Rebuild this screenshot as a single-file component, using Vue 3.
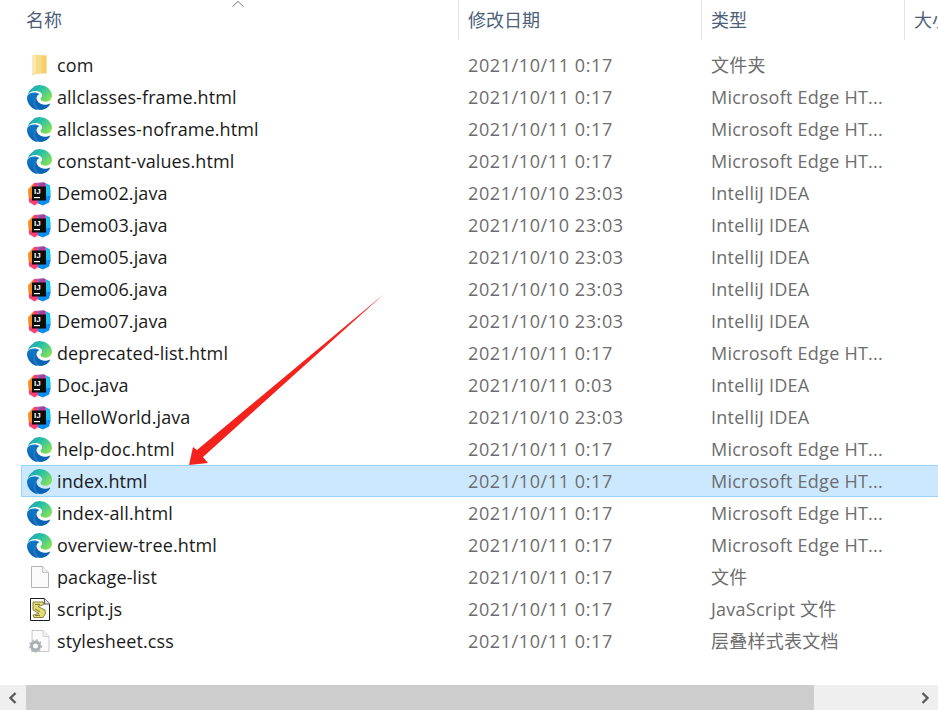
<template>
  <div class="explorer">
    <div class="header">
      <div class="col col-name">名称
        <svg class="sort" width="14" height="8" viewBox="0 0 14 8"><path d="M1.500 6.500 7 1.500l5.500 5" fill="none" stroke="#7b7b7b" stroke-width="1"/></svg>
      </div>
      <div class="col col-date">修改日期</div>
      <div class="col col-type">类型</div>
      <div class="col col-size">大小</div>
    </div>

    <div class="list">
      <div v-for="f in files" :key="f.name" class="row" :class="{ selected: f.name === 'index.html' }">
        <div class="name">
          <span class="icon">
            <svg v-if="f.icon === 'folder'" width="24" height="24" viewBox="0 0 24 24">
              <path d="M4 2.500 8 1.500l10.500 1.500v17.200L8 21l-4 1.500z" fill="#f8dc8a"/>
              <path d="M4 2.500 8 1.500V19l-4 3.500z" fill="#fbe9b0"/>
              <path d="M13.500 2.300h5v17.900h-5z" fill="#f3cf6e"/>
            </svg>
            <svg v-else-if="f.icon === 'edge'" width="25" height="25" viewBox="0 0 24 24">
              <defs>
                <linearGradient :id="'eg' + f.name" x1="0" y1="0" x2="1" y2="0.7">
                  <stop offset="0" stop-color="#0f9cc4"/>
                  <stop offset="0.5" stop-color="#2cc3a0"/>
                  <stop offset="1" stop-color="#86e05a"/>
                </linearGradient>
                <linearGradient :id="'eb' + f.name" x1="0.2" y1="0" x2="0.6" y2="1">
                  <stop offset="0" stop-color="#0c7cc8"/>
                  <stop offset="1" stop-color="#0f5fae"/>
                </linearGradient>
              </defs>
              <path d="M6 8C2 9.500 0 13 2 18c3 5 8 6.500 12.500 5.800 3.500-.7 6-2.800 7.700-5.300-4 2-8.500 2-11.200-.5-2.800-2.800-2.500-6.500 0-9C9 8 7.500 7.700 6 8z" fill="#1a7fd0"/>
              <path d="M21.860 17.860q.14 0 .25.12.1.13.1.25t-.11.33l-.32.46-.43.53-.44.5q-.21.25-.38.42l-.22.23q-.58.53-1.340 1.040-.76.51-1.600.91-.86.4-1.740.64t-1.670.24q-.9 0-1.690-.28-.8-.28-1.480-.78-.68-.5-1.220-1.170-.53-.66-.92-1.440-.38-.77-.58-1.600-.2-.83-.2-1.670 0-1 .32-1.960.33-.97.87-1.800.14.95.55 1.770.41.82 1.020 1.500.6.68 1.380 1.210.78.54 1.640.9.86.36 1.770.56.92.2 1.800.2 1.120 0 2.180-.24 1.060-.23 2.060-.72l.2-.1.2-.05z" fill="#0c62b4"/>
              <path d="M6.360 16.590q0 1.100.27 2.150.27 1.060.78 2.030.51.96 1.240 1.770.74.82 1.660 1.400-1.470-.2-2.800-.74-1.330-.55-2.480-1.370-1.150-.83-2.080-1.900-.92-1.070-1.580-2.330T.36 14.940Q0 13.540 0 12.060q0-.81.32-1.490.31-.68.83-1.230.53-.55 1.200-.96.66-.4 1.350-.66.74-.27 1.500-.39.78-.12 1.550-.12.7 0 1.420.1.72.12 1.400.35.68.23 1.320.57.63.35 1.160.83-.35 0-.7.07-.33.07-.65.23v-.02q-.63.28-1.200.74-.57.46-1.050 1.040-.48.58-.87 1.260-.38.67-.65 1.390-.27.71-.42 1.440-.15.72-.15 1.380z" :fill="`url(#eb${f.name})`"/>
              <path d="M11.960.06q1.700 0 3.330.39 1.630.38 3.070 1.150 1.430.77 2.620 1.930 1.180 1.160 1.980 2.700.49.94.76 1.960.28 1 .28 2.080 0 .89-.23 1.700-.24.8-.69 1.480-.45.68-1.100 1.220-.64.53-1.450.88-.54.24-1.110.36-.58.13-1.160.13-.42 0-.97-.03-.54-.03-1.100-.12-.55-.09-1.090-.28-.54-.19-1-.51t-.77-.77q-.31-.45-.31-1.030 0-.43.15-.72.15-.3.38-.58.23-.28.47-.55.24-.27.38-.63.14-.36.14-.75 0-.64-.28-1.250-.27-.6-.76-1.100-.49-.5-1.150-.89-.66-.38-1.420-.63-.76-.25-1.570-.38-.81-.13-1.590-.13-1.050 0-2.050.27-1 .26-1.920.76-.92.5-1.710 1.200-.79.7-1.400 1.560.5-2 1.620-3.640 1.110-1.630 2.670-2.800Q6.500 1.300 8.400.68 10.320.06 11.960.06z" :fill="`url(#eg${f.name})`"/>
            </svg>
            <svg v-else-if="f.icon === 'idea'" width="25" height="25" viewBox="0 0 25 25">
              <path d="M1.500 9 7 2l7-.5-2 20-4.500 3L2 21z" fill="#fc3f73"/>
              <path d="M1 8.500 6 3l3 8-3 7-4-1z" fill="#f98a1e"/>
              <path d="M12 2l5-.5 6 3 .5 12-1.500 5-6 3-5-2z" fill="#0a8cf5"/>
              <path d="M18 2.500l5 2 .5 10-4 1z" fill="#18c6ee"/>
              <path d="M14 1.500h4l1 5h-6z" fill="#d0308c"/>
              <rect x="5" y="5.500" width="14" height="14" fill="#0c0c0c"/>
              <text x="7" y="13" class="ij">IJ</text>
              <rect x="7" y="16" width="6" height="1.200" fill="#fff"/>
            </svg>
            <svg v-else-if="f.icon === 'file'" width="24" height="24" viewBox="0 0 24 24">
              <path d="M3.500 1.500h11l6 6v15h-17z" fill="#fafafa" stroke="#b4b4b4"/>
              <path d="M14.500 1.500v6h6" fill="#f0f0f0" stroke="#c4c4c4"/>
            </svg>
            <svg v-else-if="f.icon === 'script'" width="24" height="24" viewBox="0 0 24 24">
              <path d="M2.500 1.500h14l5 5.500v16.500h-19z" fill="#fff" stroke="#1c1c1c"/>
              <path d="M16.500 1.500V7h5" fill="#e8e8e8" stroke="#555"/>
              <path d="M5 5h10l1 2.500-6 2 7 3.500.5 3.500-2.500 4H6l-1-2.500 6-1.500-6-3.500V8z" fill="#e4dc72" stroke="#6a6a24" stroke-width=".8"/>
              <path d="M7 7.500h5M7 12l5 2.500M7 18.500h5" stroke="#6a6a24" stroke-width=".8" fill="none"/>
            </svg>
            <svg v-else width="24" height="24" viewBox="0 0 24 24">
              <path d="M4 1.500h11l6 6v15H4z" fill="#fbfbfb" stroke="#c8c8c8"/>
              <path d="M15 1.500v6h6" fill="#f0f0f0" stroke="#d2d2d2"/>
              <circle cx="7.500" cy="17" r="4" fill="none" stroke="#a9afb3" stroke-width="3"/>
              <circle cx="7.500" cy="17" r="6" fill="none" stroke="#b9bec2" stroke-width="1.500" stroke-dasharray="2 2"/>
            </svg>
          </span>
          <span>{{ f.name }}</span>
        </div>
        <div class="date">{{ f.date }}</div>
        <div class="type">{{ f.type }}</div>
      </div>
    </div>

    <div class="scrollbar">
      <div class="arrow-btn">
        <svg width="14" height="14" viewBox="0 0 14 14"><path d="M9.500 2 4.500 7l5 5" fill="none" stroke="#5a5a5a" stroke-width="2.400"/></svg>
      </div>
      <div class="thumb"></div>
      <div class="track"></div>
      <div class="arrow-btn">
        <svg width="14" height="14" viewBox="0 0 14 14"><path d="M4.500 2l5 5-5 5" fill="none" stroke="#5a5a5a" stroke-width="2.400"/></svg>
      </div>
    </div>

    <svg class="pointer" width="938" height="710" viewBox="0 0 938 710">
      <path d="M384 294 197 450 193 447 189 465 208 463 203 457z" fill="#f4221c"/>
    </svg>
  </div>
</template>

<script setup>
const EDGE = 'Microsoft Edge HT...'
const IDEA = 'IntelliJ IDEA'
const T1 = '2021/10/11 0:17'
const T2 = '2021/10/10 23:03'

const files = [
  { name: 'com', icon: 'folder', date: T1, type: '文件夹' },
  { name: 'allclasses-frame.html', icon: 'edge', date: T1, type: EDGE },
  { name: 'allclasses-noframe.html', icon: 'edge', date: T1, type: EDGE },
  { name: 'constant-values.html', icon: 'edge', date: T1, type: EDGE },
  { name: 'Demo02.java', icon: 'idea', date: T2, type: IDEA },
  { name: 'Demo03.java', icon: 'idea', date: T2, type: IDEA },
  { name: 'Demo05.java', icon: 'idea', date: T2, type: IDEA },
  { name: 'Demo06.java', icon: 'idea', date: T2, type: IDEA },
  { name: 'Demo07.java', icon: 'idea', date: T2, type: IDEA },
  { name: 'deprecated-list.html', icon: 'edge', date: T1, type: EDGE },
  { name: 'Doc.java', icon: 'idea', date: '2021/10/11 0:03', type: IDEA },
  { name: 'HelloWorld.java', icon: 'idea', date: T2, type: IDEA },
  { name: 'help-doc.html', icon: 'edge', date: T1, type: EDGE },
  { name: 'index.html', icon: 'edge', date: T1, type: EDGE },
  { name: 'index-all.html', icon: 'edge', date: T1, type: EDGE },
  { name: 'overview-tree.html', icon: 'edge', date: T1, type: EDGE },
  { name: 'package-list', icon: 'file', date: T1, type: '文件' },
  { name: 'script.js', icon: 'script', date: T1, type: 'JavaScript 文件' },
  { name: 'stylesheet.css', icon: 'css', date: T1, type: '层叠样式表文档' }
]
</script>

<style>
html, body {
  margin: 0;
  background: #fff;
  overflow: hidden;
}
</style>

<style scoped>
.explorer {
  position: relative;
  width: 938px;
  height: 710px;
  overflow: hidden;
  background: #fff;
  font-family: "Open Sans", "Noto Sans CJK SC", sans-serif;
  font-size: 18px;
}

.header {
  display: flex;
  height: 40px;
  color: #4c607a;
}

.col {
  position: relative;
  flex-shrink: 0;
  box-sizing: border-box;
  line-height: 40px;
  white-space: nowrap;
  border-left: 1px solid #e5e5e5;
  padding-left: 9px;
}

.col-name {
  width: 458px;
  padding-left: 26px;
  border-left: none;
}

.col-date {
  width: 243px;
}

.col-type {
  width: 203px;
}

.col-size {
  width: 34px;
  overflow: hidden;
}

.sort {
  position: absolute;
  left: 231px;
  top: 0;
}

.list {
  margin-top: 9px;
  height: 636px;
}

.row {
  display: grid;
  grid-template-columns: 446px 243px 1fr;
  box-sizing: border-box;
  height: 32px;
  margin-left: 21px;
  line-height: 30px;
  border: 1px solid transparent;
  border-right: none;
  color: #6d6d6d;
}

.row.selected {
  background: #cce8ff;
  border-color: #99d1ff;
}

.name {
  display: flex;
  align-items: center;
  color: #1a1a1a;
  letter-spacing: 0.1px;
}

.date {
  letter-spacing: 0.6px;
}

.type {
  letter-spacing: 0.25px;
}

.icon {
  display: flex;
  justify-content: center;
  width: 25px;
  margin-left: 5px;
  margin-right: 5px;
}

.ij {
  font-family: "Liberation Sans", sans-serif;
  font-size: 8px;
  font-weight: 700;
  fill: #fff;
}

.scrollbar {
  display: flex;
  height: 25px;
  background: #efefef;
}

.arrow-btn {
  display: flex;
  align-items: center;
  justify-content: center;
  width: 26px;
}

.thumb {
  width: 788px;
  background: #cdcdcd;
}

.track {
  flex: 1;
}

.pointer {
  position: absolute;
  left: 0;
  top: 0;
  pointer-events: none;
}
</style>
